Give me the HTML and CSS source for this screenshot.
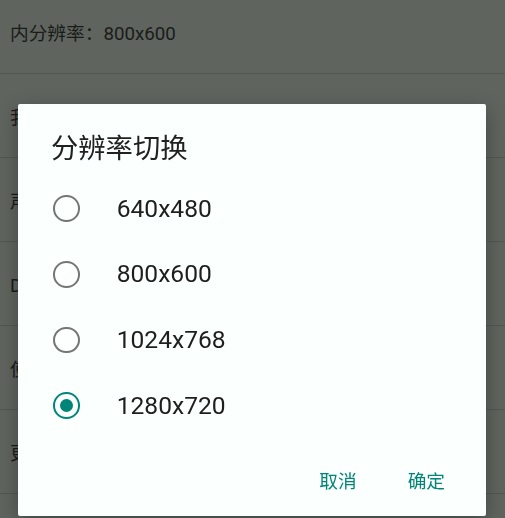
FILE: index.html
```html
<!DOCTYPE html>
<html lang="zh-CN">
<head>
    <meta charset="UTF-8">
    <meta name="viewport" content="width=device-width, initial-scale=1.0">
    <title>分辨率切换</title>
    <link rel="stylesheet" href="styles.css">
</head>
<body>
    <div class="settings">
        <div class="row">内分辨率：800x600</div>
        <div class="row">我的存档</div>
        <div class="row">声音设置</div>
        <div class="row">DOS设置</div>
        <div class="row">使用说明</div>
        <div class="row">更多设置</div>
    </div>

    <div class="dialog">
        <h2 class="dialog-title">分辨率切换</h2>
        <div class="options">
            <div class="option"><span class="radio"></span><span class="label">640x480</span></div>
            <div class="option"><span class="radio"></span><span class="label">800x600</span></div>
            <div class="option"><span class="radio"></span><span class="label">1024x768</span></div>
            <div class="option checked"><span class="radio"></span><span class="label">1280x720</span></div>
        </div>
        <div class="actions">
            <button class="action">取消</button>
            <button class="action">确定</button>
        </div>
    </div>
</body>
</html>
```

FILE: styles.css
```css
body {
    margin: 0;
    font-family: Roboto, "Noto Sans CJK SC", sans-serif;
    background-color: #5f645f;
    overflow: hidden;
    height: 518px;
}
.settings {
    margin-top: -10px;
}
.row {
    height: 83px;
    border-bottom: 1px solid #535753;
    display: flex;
    align-items: center;
    padding-left: 10px;
    font-size: 18.7px;
    color: #1a1c1a;
}
.dialog {
    position: fixed;
    left: 18px;
    top: 104px;
    width: 468px;
    height: 412px;
    background-color: #fbfffd;
    border-radius: 2px;
    box-shadow: 0 6px 20px rgba(0, 0, 0, 0.3);
    box-sizing: border-box;
    padding: 29px 0 0;
    display: flex;
    flex-direction: column;
}
.dialog-title {
    margin: 0 0 11px;
    padding-left: 33px;
    font-size: 27.3px;
    font-weight: normal;
    line-height: 32px;
    color: #212121;
}
.option {
    height: 65.6px;
    display: flex;
    align-items: center;
    padding-left: 35px;
}
.radio {
    width: 26.7px;
    height: 26.7px;
    box-sizing: border-box;
    border: 2.7px solid #757575;
    border-radius: 50%;
    display: flex;
    align-items: center;
    justify-content: center;
}
.checked .radio {
    border-color: #008577;
}
.checked .radio::after {
    content: "";
    width: 13.3px;
    height: 13.3px;
    border-radius: 50%;
    background-color: #008577;
}
.label {
    margin-left: 37px;
    font-size: 24.6px;
    line-height: 32px;
    color: #1e1e1e;
}
.actions {
    display: flex;
    justify-content: flex-end;
    gap: 25px;
    padding: 17px 28px 0 0;
}
.action {
    height: 48px;
    padding: 0 13px;
    border: none;
    background: none;
    font-family: Roboto, "Noto Sans CJK SC", sans-serif;
    font-size: 18.7px;
    color: #008577;
}
```
